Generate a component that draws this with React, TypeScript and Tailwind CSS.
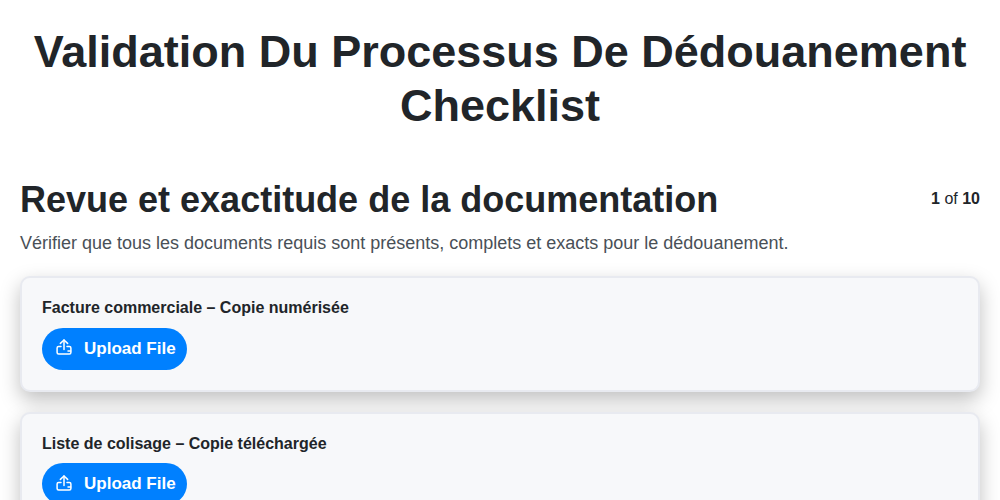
function UploadIcon() {
  return (
    <svg className="mb-[3px]" width="16" height="16" viewBox="0 0 16 16" fill="none" stroke="currentColor" strokeWidth="1.5" strokeLinecap="round" strokeLinejoin="round">
      <path d="M8 10.5V1" />
      <path d="M4.4 4.4 8 1l3.6 3.4" />
      <path d="M5 7.4H2.6A1.5 1.5 0 0 0 1.1 8.9v4.6A1.5 1.5 0 0 0 2.6 15h10.8a1.5 1.5 0 0 0 1.5-1.5V8.9a1.5 1.5 0 0 0-1.5-1.5H11" />
      <path d="M12 12h2.6" />
    </svg>
  );
}

function ChecklistItem({ label }: { label: string }) {
  return (
    <div className="rounded-[10px] border-2 border-[#e8eaf0] bg-[#f7f8fa] p-5 shadow-[0_8px_20px_rgba(0,0,0,0.25)]">
      <div className="text-[16px] leading-[19.6px] font-bold text-[#212529]">{label}</div>
      <button className="mt-[10px] flex h-[42px] items-center gap-3 rounded-full bg-[#0080ff] pr-[11px] pl-[14px] text-[17px] font-bold text-white">
        <UploadIcon />
        Upload File
      </button>
    </div>
  );
}

export default function App() {
  return (
    <div className="h-[500px] overflow-hidden bg-white font-['Liberation_Sans',Arial,sans-serif] text-[#212529]">
      <h1 className="px-5 pt-[25px] text-center text-[45px] leading-[54px] font-bold">
        Validation Du Processus De Dédouanement Checklist
      </h1>
      <div className="px-5 pt-[45px]">
        <div className="flex items-start justify-between">
          <h2 className="text-[36px] leading-[43px] font-bold">Revue et exactitude de la documentation</h2>
          <div className="pt-[11px] text-[16px] leading-[20px]">
            <b>1</b> of <b>10</b>
          </div>
        </div>
        <p className="mt-[9px] text-[18px] leading-[27px] text-[#495057]">
          Vérifier que tous les documents requis sont présents, complets et exacts pour le dédouanement.
        </p>
        <div className="mt-[19px] flex flex-col gap-5">
          <ChecklistItem label="Facture commerciale – Copie numérisée" />
          <ChecklistItem label="Liste de colisage – Copie téléchargée" />
        </div>
      </div>
    </div>
  );
}
